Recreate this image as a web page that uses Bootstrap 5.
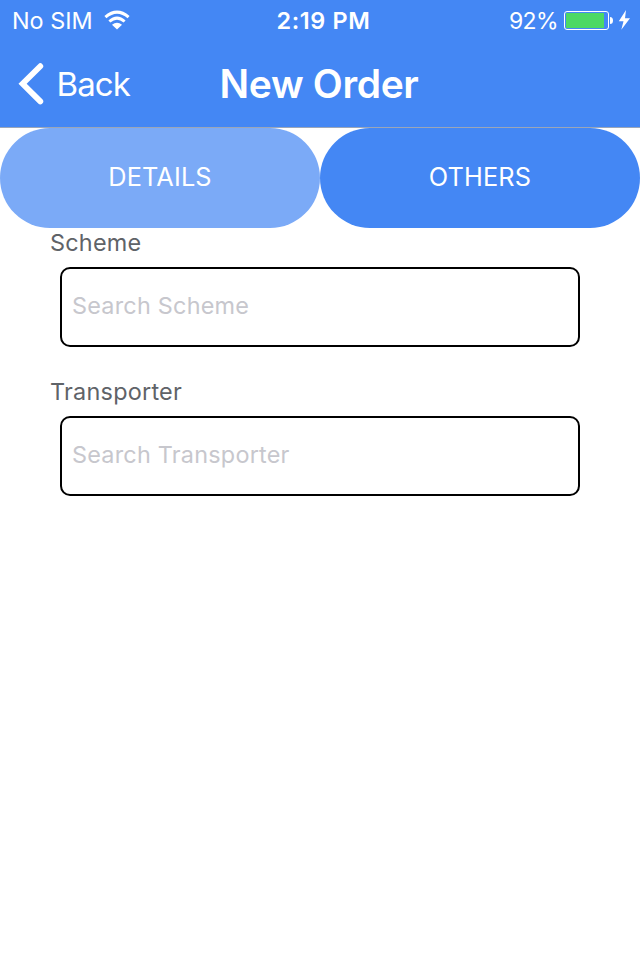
<!DOCTYPE html>
<html lang="en">
<head>
<meta charset="utf-8">
<meta name="viewport" content="width=device-width, initial-scale=1">
<title>New Order</title>
<link rel="stylesheet" href="https://cdn.jsdelivr.net/npm/bootstrap@5.3.0/dist/css/bootstrap.min.css">
<style>
body{font-family:Inter,"Liberation Sans",sans-serif;background:#fff}
.app-head{background:#4487f4;height:128px;border-bottom:1px solid #9ba6b8}
.status-bar{height:40px;font-size:23.4px;line-height:40px;padding:1px 10px 0 12px}
.side{flex:1 1 0}
.clock{letter-spacing:.68px;padding-left:5px}
.percent{letter-spacing:-.6px;margin-right:6px;font-size:23px}
.title-bar{height:87px}
.back-link{font-size:33px;line-height:85px;gap:12.5px;letter-spacing:-.9px;padding:0 0 0 18px}
.back-link span{padding-top:2px}
.screen-title{font-size:39px;font-weight:600;line-height:87px;letter-spacing:-.35px;padding-right:2px}
.tab-pill{height:100px;border-radius:50px;border:0;background:#4487f4;color:#fff;font-size:25.3px;font-weight:400;padding:0 6px 2px;letter-spacing:.15px}
.tab-pill.current{background:#7baaf7}
.order-form{padding:0 50px}
.field-label{color:#5f6368;font-size:23.4px;line-height:30px;height:39px;margin:0;letter-spacing:.25px}
.search-box{margin:0 10px 30px;width:520px;height:80px;border:2px solid #000;border-radius:10px;padding:0 10px 4px;font-size:23.4px;letter-spacing:.23px}
.search-box::placeholder{color:#c7c7cd;opacity:1}
</style>
</head>
<body>
<header class="app-head text-white">
  <div class="status-bar d-flex">
    <div class="side d-flex align-items-center">
      <span>No SIM</span>
      <svg class="ms-2" width="32" height="24" viewBox="0 0 32 24" fill="none" stroke="#fff" stroke-width="3"><path d="M4.400 8.200Q16 -1.900 27.600 8.200"/><path d="M8.400 12.500Q16 5.700 23.600 12.500"/><path d="M11 15.800Q16 11.700 21 15.800L16 20.600Z" fill="#fff" stroke="none"/></svg>
    </div>
    <span class="clock fw-semibold">2:19 PM</span>
    <div class="side d-flex align-items-center justify-content-end">
      <span class="percent">92%</span>
      <svg class="flex-shrink-0" width="66" height="24" viewBox="0 0 66 24"><rect x=".5" y="2.500" width="44" height="18" rx="2.500" fill="none" stroke="#fff"/><rect x="2" y="4" width="38" height="15" fill="#4cd964"/><path d="M46 8q3 0 3 3.500t-3 3.500z" fill="#fff"/><path d="M62 1L54.800 12.300h4.700L57.300 20.800 66 9.200h-5z" fill="#fff"/></svg>
    </div>
  </div>
  <nav class="title-bar d-flex">
    <div class="side"><a href="#" class="back-link d-inline-flex align-items-center text-white text-decoration-none"><svg width="26" height="42" viewBox="0 0 26 42" fill="none" stroke="#fff" stroke-width="5.800" stroke-linecap="round" stroke-linejoin="miter"><path d="M22.300 3.200L4.600 20.800 22.300 38.400"/></svg><span>Back</span></a></div>
    <h1 class="screen-title mb-0">New Order</h1>
    <div class="side"></div>
  </nav>
</header>
<main>
  <div class="row g-0">
    <div class="col-6"><button type="button" class="tab-pill current w-100">DETAILS</button></div>
    <div class="col-6"><button type="button" class="tab-pill w-100">OTHERS</button></div>
  </div>
  <form class="order-form">
    <label class="field-label d-block" for="scheme">Scheme</label>
    <input class="search-box d-block" id="scheme" type="text" placeholder="Search Scheme">
    <label class="field-label d-block" for="transporter">Transporter</label>
    <input class="search-box d-block" id="transporter" type="text" placeholder="Search Transporter">
  </form>
</main>
<script src="https://cdn.jsdelivr.net/npm/bootstrap@5.3.0/dist/js/bootstrap.bundle.min.js"></script>
</body>
</html>
